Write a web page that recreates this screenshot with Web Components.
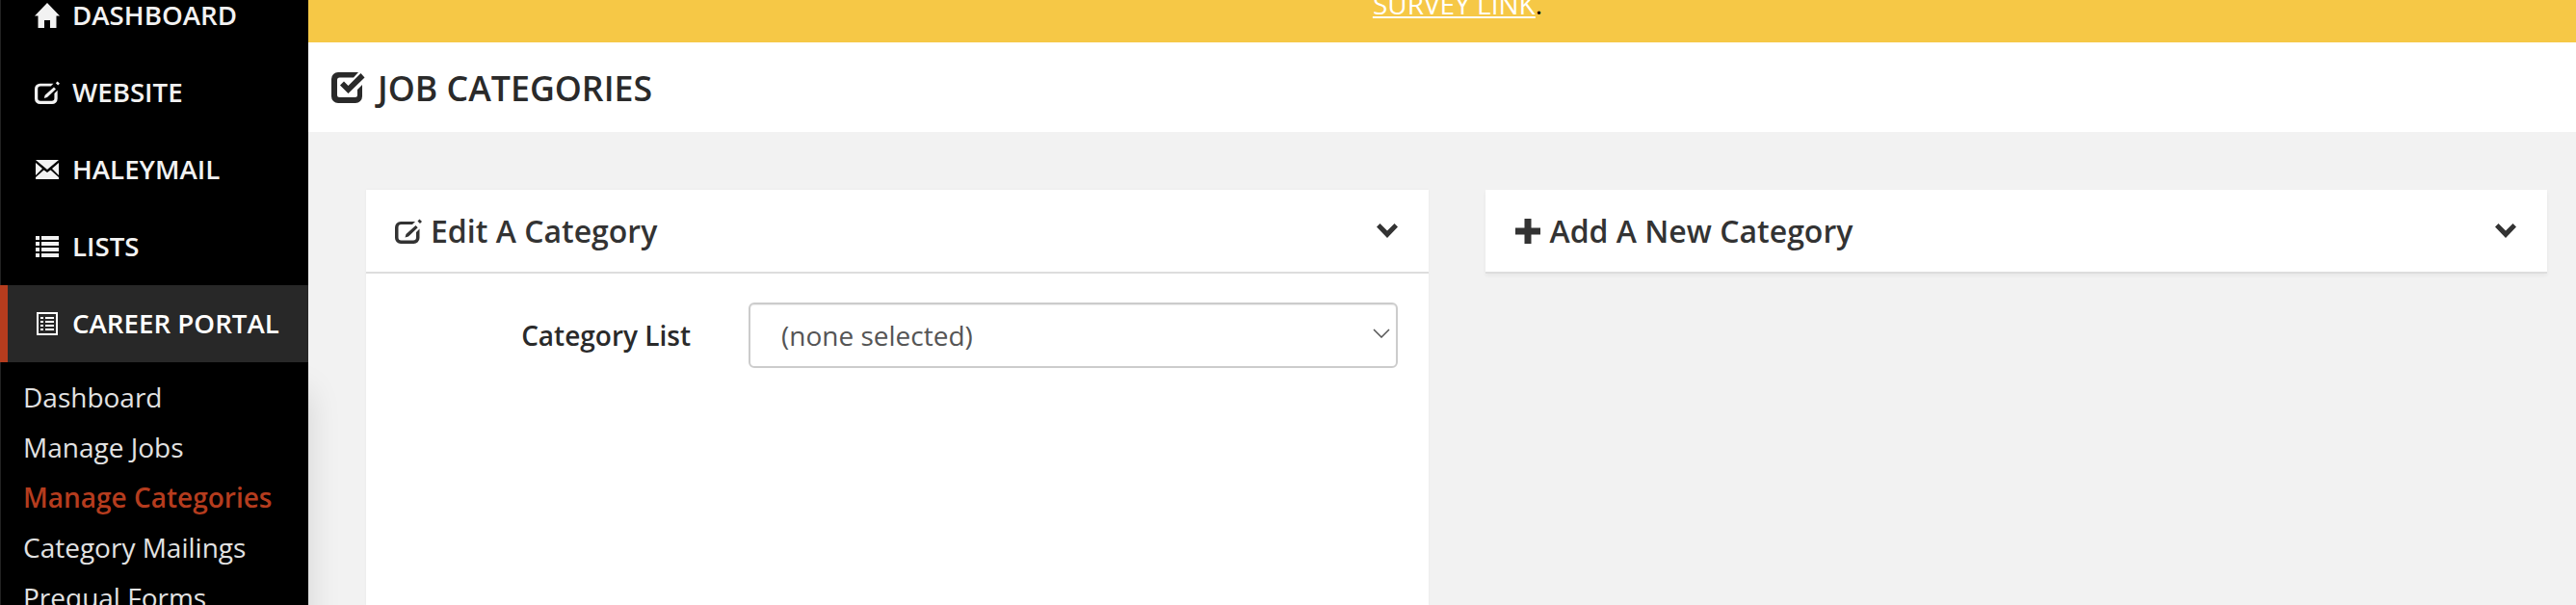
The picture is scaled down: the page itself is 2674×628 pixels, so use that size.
<!DOCTYPE html>
<html><head><meta charset="utf-8"><style>
html,body{margin:0;height:100%;overflow:hidden;background:#f2f2f2;font-family:"Open Sans",sans-serif}
</style></head><body>
<app-shell></app-shell>
<script>
const ICONS={
home:'<svg viewBox="0 0 26 26" width="26" height="26"><path fill="currentColor" d="M13 0L26 13.500h-3.500V26H16v-8h-6v8H3.500V13.500H0z"/></svg>',
edit:'<svg viewBox="0 0 28 26" width="100%" height="100%"><path fill="currentColor" d="M6 3h15l-3 3H6.500A3 3 0 0 0 3.500 9v10.500a3 3 0 0 0 3 3H19a3 3 0 0 0 3-3V14l3.500-3.500V20a6 6 0 0 1-6 6H6a6 6 0 0 1-6-6V9a6 6 0 0 1 6-6z"/><path fill="currentColor" d="M21.500 7L23.700 9.200 14 18.500l-3.500 1 1-3.500zM25.500 .5L28 3 26 5 23.500 2.500z"/></svg>',
mail:'<svg viewBox="0 0 24 20" width="24" height="20"><path fill="currentColor" d="M0 0h24L12 10zM0 3l7 6-7 7zM24 3v13l-7-7zM8.500 10.500L12 13l3.500-2.500L24 18v2H0v-2z"/></svg>',
list:'<svg viewBox="0 0 24 22" width="24" height="22"><path fill="currentColor" d="M0 0h4v4H0zM6 0h18v4H6zM0 6h4v4H0zM6 6h18v4H6zM0 12h4v4H0zM6 12h18v4H6zM0 18h4v4H0zM6 18h18v4H6z"/></svg>',
form:'<svg viewBox="0 0 22 24" width="22" height="24"><path fill="currentColor" fill-rule="evenodd" d="M0 0h22v24H0zM2 2v20h18V2zM4 5h3v2H4zM9 5h9v2H9zM4 9h3v2H4zM9 9h9v2H9zM4 13h3v2H4zM9 13h9v2H9zM4 17h3v2H4zM9 17h9v2H9z"/></svg>',
check:'<svg viewBox="0 0 35 33" width="35" height="33"><path fill="currentColor" d="M7 1h21l-5 5.500H8.500A2.500 2.500 0 0 0 6 9v15.500A2.500 2.500 0 0 0 8.500 27h16a2.500 2.500 0 0 0 2.500-2.500V19l5-5v12a7 7 0 0 1-7 7H7a7 7 0 0 1-7-7V8a7 7 0 0 1 7-7z"/><path fill="currentColor" d="M30.500 2l4 4.500L17.500 23 9 14.500l4-4 4.500 4.500z"/></svg>',
plus:'<svg viewBox="0 0 26 26" width="26" height="26"><path fill="currentColor" d="M9.500 0h7v9.500H26v7h-9.500V26h-7v-9.500H0v-7h9.500z"/></svg>',
chev:'<svg viewBox="0 0 22 15" width="22" height="15"><path fill="currentColor" d="M3.500 0L11 7.500 18.500 0 22 3.500 11 15 0 3.500z"/></svg>'
};
class NavItem extends HTMLElement{constructor(){super();this.attachShadow({mode:'open'}).innerHTML=`<style>
:host{display:flex;align-items:center;height:80px;box-sizing:border-box;padding-left:36px;color:#f2f2f2;font-size:27.700px;font-weight:600;line-height:1;white-space:nowrap}
:host([active]){background:#282828;border-left:8px solid #b53c1e;padding-left:28px;color:#fff}
.i{width:26px;height:26px;display:flex;justify-content:center;align-items:center;margin-right:13px;flex:none}
</style><span class="i">${ICONS[this.getAttribute('icon')]}</span><slot></slot>`}}
class SubItem extends HTMLElement{constructor(){super();this.attachShadow({mode:'open'}).innerHTML=`<style>
:host{display:block;height:52px;line-height:52px;padding-left:24px;color:#e2e2e2;font-size:28px;white-space:nowrap}
:host([active]){color:#b53c1e;font-weight:600}
</style><slot></slot>`}}
class SideBar extends HTMLElement{constructor(){super();this.attachShadow({mode:'open'}).innerHTML=`<style>
:host{display:block;width:320px;flex:none;background:#000;box-shadow:inset 1px 0 #222;box-sizing:border-box;height:100%;position:relative;z-index:1}
.w{margin-top:-24px}
.sub{padding-top:10px;height:400px;box-shadow:0 30px 32px rgba(0,0,0,.13);clip-path:inset(0 -80px -80px 0)}
</style><div class="w"><slot name="top"></slot><div class="sub"><slot></slot></div></div>`}}
class NoticeBar extends HTMLElement{constructor(){super();this.attachShadow({mode:'open'}).innerHTML=`<style>
:host{display:flex;justify-content:center;align-items:flex-end;height:44px;background:#f6c846;color:#000;font-size:28px;line-height:38px;overflow:hidden;padding-left:32px;box-sizing:border-box;padding-bottom:21px;flex:none}
a{color:#fff;text-decoration:underline}
.l{height:38px;flex:none;white-space:nowrap}
</style><div class="l"><a href="#"><slot></slot></a>.</div>`}}
class PageTitle extends HTMLElement{constructor(){super();this.attachShadow({mode:'open'}).innerHTML=`<style>
:host{display:flex;align-items:center;height:93px;background:#fff;padding-left:24px;color:#2a2a2a;font-size:35.700px;font-weight:600;gap:13px;flex:none}
</style>${ICONS.check}<slot></slot>`}}
class PanelCard extends HTMLElement{constructor(){super();this.attachShadow({mode:'open'}).innerHTML=`<style>
:host{display:block;flex:1 1 0;min-width:0;background:#fff;box-shadow:0 0 2px rgba(0,0,0,.06)}
:host([collapsed]){background:none;box-shadow:none}
header{display:flex;align-items:center;height:85px;background:#fff;border-bottom:2px solid #ddd;padding:0 32px 0 30px;color:#333;font-size:32px;font-weight:600}
:host([collapsed]) header{box-shadow:0 2px 4px rgba(0,0,0,.05)}
.t{flex:1;display:flex;align-items:center;gap:9px}
.ic{display:flex;width:28px;height:26px;justify-content:center;align-items:center;flex:none}
.ch{display:flex}
.b{padding:30px 32px 31px 30px}
</style><header><span class="t"><span class="ic">${ICONS[this.getAttribute('icon')]}</span><slot name="title"></slot></span><span class="ch">${ICONS.chev}</span></header><div class="b"><slot></slot></div>`}}
class FieldRow extends HTMLElement{constructor(){super();this.attachShadow({mode:'open'}).innerHTML=`<style>
:host{display:flex;align-items:center;gap:60px;color:#2a2a2a;font-size:28px}
label{width:307px;flex:none;text-align:right;font-weight:600}
.s{flex:1;height:68px;box-sizing:border-box;border:2px solid #ccc;border-radius:6px;box-shadow:inset 0 1px 1px rgba(0,0,0,.075);display:flex;align-items:center;padding:0 32px;color:#555;background:#fff;justify-content:space-between}
svg{margin-right:-26px;margin-top:-4px}
</style><label>${this.getAttribute('label')}</label><div class="s"><slot></slot><svg width="18" height="10" viewBox="0 0 18 10"><path d="M1 1l8 8 8-8" fill="none" stroke="#555" stroke-width="1.500"/></svg></div>`}}
class AppShell extends HTMLElement{constructor(){super();this.attachShadow({mode:'open'}).innerHTML=`<style>
:host{display:flex;height:628px;overflow:hidden}
main{flex:1;min-width:0;display:flex;flex-direction:column}
.c{flex:1;display:flex;gap:59px;padding:60px 30px 0 60px;min-height:0;overflow:hidden}
</style>
<side-bar>
<nav-item slot="top" icon="home">DASHBOARD</nav-item>
<nav-item slot="top" icon="edit">WEBSITE</nav-item>
<nav-item slot="top" icon="mail">HALEYMAIL</nav-item>
<nav-item slot="top" icon="list">LISTS</nav-item>
<nav-item slot="top" icon="form" active>CAREER PORTAL</nav-item>
<sub-item>Dashboard</sub-item><sub-item>Manage Jobs</sub-item><sub-item active>Manage Categories</sub-item><sub-item>Category Mailings</sub-item><sub-item>Prequal Forms</sub-item>
</side-bar>
<main>
<notice-bar>SURVEY LINK</notice-bar>
<page-title>JOB CATEGORIES</page-title>
<div class="c">
<panel-card icon="edit"><span slot="title">Edit A Category</span><field-row label="Category List">(none selected)</field-row></panel-card>
<panel-card icon="plus" collapsed><span slot="title">Add A New Category</span></panel-card>
</div></main>`}}
for(const [n,c] of Object.entries({'nav-item':NavItem,'sub-item':SubItem,'side-bar':SideBar,'notice-bar':NoticeBar,'page-title':PageTitle,'panel-card':PanelCard,'field-row':FieldRow,'app-shell':AppShell}))customElements.define(n,c);
</script></body></html>
